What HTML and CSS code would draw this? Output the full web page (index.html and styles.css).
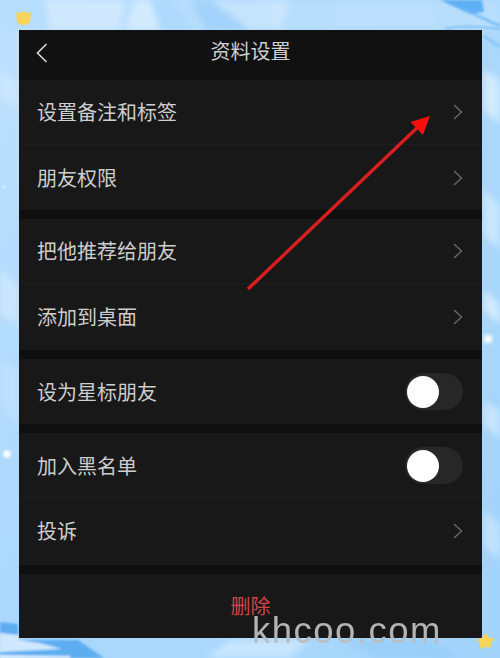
FILE: index.html
```html
<!DOCTYPE html>
<html lang="zh">
<head>
<meta charset="utf-8">
<title>资料设置</title>
<link rel="stylesheet" href="styles.css">
</head>
<body>
<div class="page">
  <svg class="backdrop" viewBox="0 0 500 658" width="500" height="658" aria-hidden="true">
    <defs>
      <filter id="soft" x="-20%" y="-20%" width="140%" height="140%"><feGaussianBlur stdDeviation="3"/></filter>
      <filter id="fine" x="-30%" y="-30%" width="160%" height="160%"><feGaussianBlur stdDeviation="0.8"/></filter>
    </defs>
    <g filter="url(#soft)">
      <path d="M0 0 H500 V30 H0Z" fill="#b8defd"/>
      <path d="M45 0 L125 0 L120 30 L50 30Z" fill="#cfe8fe"/>
      <path d="M135 0 L170 0 L195 30 L125 30Z" fill="#d9eeff" opacity=".8"/>
      <path d="M150 0 L170 0 L195 30 L160 30Z" fill="#a5d4fb" opacity=".8"/>
      <path d="M190 0 L265 0 L275 30 L205 30Z" fill="#a2d2fb"/>
      <path d="M210 0 L290 0 L280 30 L250 30Z" fill="#cfe8fe" opacity=".75"/>
      <path d="M340 0 L430 0 L440 30 L330 30Z" fill="#bbdffd"/>
      <path d="M0 70 L18 82 L18 110 L0 95Z" fill="#cde8ff" opacity=".8"/>
      <path d="M0 270 L18 285 L18 325 L0 315Z" fill="#cfe8ff" opacity=".8"/>
      <path d="M0 360 L18 368 L18 430 L0 400Z" fill="#bfe1fe" opacity=".8"/>
      <path d="M484 70 L500 80 L500 125 L484 110Z" fill="#d2eaff"/>
      <path d="M484 190 L500 205 L500 250 L484 235Z" fill="#c9e6ff"/>
      <path d="M484 290 L500 305 L500 325 L484 310Z" fill="#d2eaff"/>
      <path d="M484 400 L500 410 L500 440 L484 425Z" fill="#c5e4ff"/>
      <path d="M484 510 L500 525 L500 560 L484 545Z" fill="#c0e2ff"/>
      <path d="M230 640 L310 640 L290 658 L205 658Z" fill="#cde8ff" opacity=".8"/>
      <path d="M340 640 L430 640 L460 658 L380 658Z" fill="#8fcaf8" opacity=".55"/>
    </g>
    <g filter="url(#fine)">
      <path d="M440 0 L482 0 L484 12 L470 14Z" fill="#5eb0f4"/>
      <path d="M465 10 L500 26" stroke="#6fb8f4" stroke-width="2" fill="none"/>
      <path d="M445 29 Q462 24 500 29" stroke="#6fb8f4" stroke-width="1.5" fill="none"/>
      <path d="M484 36 L500 47" stroke="#7cc0f6" stroke-width="2" fill="none"/>
      <path d="M0 622 L18 624 L18 640 L78 640 L104 658 L0 658Z" fill="#5dadf1"/>
      <path d="M0 633 L18 635 L18 640 L40 643 L62 649 L0 652Z" fill="#cfe8fe"/>
      <path d="M0 655 L70 656 L70 658 L0 658Z" fill="#e0f0ff"/>
    </g>
    <circle cx="7" cy="454" r="3.8" fill="#f6fbff" filter="url(#fine)"/>
    <circle cx="4" cy="187" r="1.5" fill="#e6f4ff" filter="url(#fine)"/>
    <circle cx="488" cy="339" r="4" fill="#ffffff" filter="url(#soft)"/>
    <circle cx="488" cy="339" r="3" fill="#ffffff" filter="url(#fine)" opacity=".8"/>
  </svg>

  <main class="panel">
    <header class="topbar">
      <svg class="back" viewBox="0 0 12 20" width="12" height="20" aria-hidden="true"><path d="M10.5 1 L1.5 10 L10.5 19"/></svg>
      <h1 class="title">资料设置</h1>
    </header>

    <section class="group">
      <div class="row"><span>设置备注和标签</span><svg class="chev" viewBox="0 0 10 16" width="10" height="16"><path d="M1 1 L8.5 8 L1 15"/></svg></div>
      <div class="row"><span>朋友权限</span><svg class="chev" viewBox="0 0 10 16" width="10" height="16"><path d="M1 1 L8.5 8 L1 15"/></svg></div>
    </section>

    <section class="group">
      <div class="row"><span>把他推荐给朋友</span><svg class="chev" viewBox="0 0 10 16" width="10" height="16"><path d="M1 1 L8.5 8 L1 15"/></svg></div>
      <div class="row row-tall"><span>添加到桌面</span><svg class="chev" viewBox="0 0 10 16" width="10" height="16"><path d="M1 1 L8.5 8 L1 15"/></svg></div>
    </section>

    <section class="group">
      <div class="row row-mid"><span>设为星标朋友</span><div class="switch"><div class="knob"></div></div></div>
    </section>

    <section class="group">
      <div class="row row-low"><span>加入黑名单</span><div class="switch"><div class="knob"></div></div></div>
      <div class="row row-last"><span>投诉</span><svg class="chev" viewBox="0 0 10 16" width="10" height="16"><path d="M1 1 L8.5 8 L1 15"/></svg></div>
    </section>

    <section class="group delete">删除</section>
  </main>

  <svg class="overlay" viewBox="0 0 500 658" width="500" height="658" aria-hidden="true">
    <path d="M248 289 L420 125" stroke="#d81e1e" stroke-width="3.4" fill="none"/>
    <path d="M430 116 L410.5 122 L423 135Z" fill="#fa0d0d"/>
    <path class="star" d="M17 13 L20 14 L23.5 12 L27 14 L30 13 L29.5 21 L27 24 L20 24 L17.5 21Z"/>
    <path class="star" d="M486 634 L488 638 L493 639 L490 643 L490 647 L485 646 L481 648 L481 643 L478 640 L483 638Z"/>
  </svg>

  <div class="watermark">khcoo.com</div>
</div>
</body>
</html>
```

FILE: styles.css
```css
* { box-sizing: border-box; }
html, body { margin: 0; padding: 0; }
body { width: 500px; height: 658px; overflow: hidden; font-family: "Noto Sans CJK SC", "Liberation Sans", sans-serif; }

.page {
  position: relative;
  width: 500px;
  height: 658px;
  padding: 30px 18px 20px 19px;
  background: linear-gradient(115deg, #bfe1fe 0%, #a9d7fc 40%, #aad8fc 70%, #a2d3fb 100%);
}
.backdrop { position: absolute; left: 0; top: 0; }

.panel {
  position: relative;
  height: 608px;
  background: #0f0f0f;
  display: flex;
  flex-direction: column;
  overflow: hidden;
}

.topbar {
  position: relative;
  height: 50px;
  background: #111111;
  display: flex;
  align-items: center;
  justify-content: center;
  flex: none;
}
.back { position: absolute; left: 17px; top: 13px; fill: none; stroke: #d8d8d8; stroke-width: 1.6; }
.title { margin: 0; font-size: 20px; font-weight: 400; color: #cfcfcf; line-height: 1; position: relative; top: -4px; }

.group { background: #181818; flex: none; margin-bottom: 9px; }
.group:last-child { margin-bottom: 0; }
.row {
  height: 65px;
  display: flex;
  align-items: center;
  justify-content: space-between;
  padding: 0 18px 1px 18px;
  font-size: 20px;
  color: #cdcdcd;
  border-bottom: 1px solid #1e1e1e;
}
.row:last-child { border-bottom: 0; }
.row-tall { height: 66px; }
.row-low { padding-bottom: 0; }
.row-last { height: 67px; padding-bottom: 2px; }
.chev { fill: none; stroke: #666666; stroke-width: 1.5; margin-right: 1px; margin-top: 1px; }

.switch { width: 58px; height: 37px; border-radius: 19px; background: #272727; position: relative; margin-right: 1px; }
.knob { position: absolute; left: 2px; top: 3px; width: 32px; height: 32px; border-radius: 50%; background: #ffffff; }

.delete {
  height: 64px;
  display: flex;
  align-items: flex-start;
  justify-content: center;
  padding-top: 18px;
  font-size: 20px;
  line-height: 28px;
  color: #d0464a;
}

.overlay { position: absolute; left: 0; top: 0; pointer-events: none; }
.star { fill: #f8d458; stroke: #f8d458; stroke-width: 1.5; stroke-linejoin: round; }

.watermark {
  position: absolute;
  left: 252px;
  top: 610px;
  font-family: "Liberation Sans", sans-serif;
  font-size: 36.5px;
  line-height: 42px;
  letter-spacing: 1.5px;
  color: rgba(188, 188, 188, 0.95);
}
```
